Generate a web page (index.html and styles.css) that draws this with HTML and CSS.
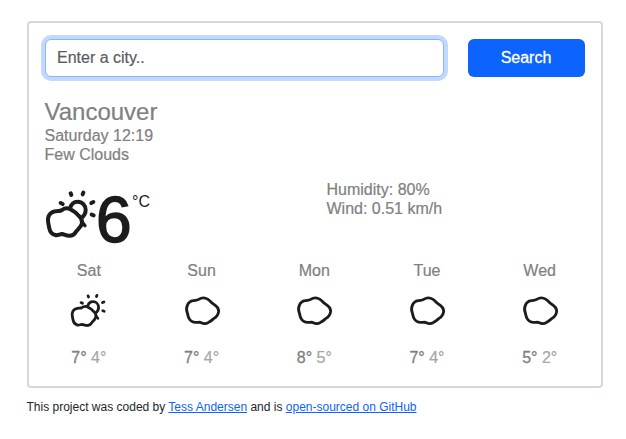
FILE: index.html
```html
<!DOCTYPE html>
<html lang="en">
<head>
<meta charset="utf-8">
<title>Weather</title>
<link rel="stylesheet" href="styles.css">
</head>
<body>
<svg class="defs" aria-hidden="true">
  <symbol id="few" viewBox="0 0 180 180">
    <g fill="none" stroke="#1c1c1c" stroke-linecap="round" stroke-linejoin="round">
      <path stroke-width="12" d="M84 71C87 58 95 50 107 50C121 50 131 61 131 75C131 85 126 93 118 99"/>
      <path stroke-width="12" d="M40 79C48 76 53 80 60 75C68 69 79 69 87 74C94 79 99 79 105 87C109 92 115 96 118 102C122 111 120 118 115 125C110 132 106 134 102 140C97 149 91 153 81 152C73 152 67 148 60 147C52 148 47 152 40 150C29 148 24 140 22 130C20 120 17 110 18 101C20 88 28 81 40 79Z"/>
      <path stroke-width="10" d="M120 110L129 122"/>
      <path stroke-width="12" d="M86 25L88 30M124 23L122 28M148 54L154 51M149 89L155 91M56 54L62 57"/>
    </g>
  </symbol>
  <symbol id="cloud" viewBox="0 0 120 120">
    <path fill="none" stroke="#1c1c1c" stroke-width="8.5" stroke-linejoin="round" d="M33 32C40 30 44 32 50 28C58 23 70 23 78 28C84 32 87 37 93 41C102 46 110 54 110 64C109 74 103 81 95 86C90 90 86 94 80 97C72 102 65 102 58 98C52 95 47 98 41 97C31 97 25 92 21 85C18 80 18 75 16 69C13 62 13 53 16 46C19 39 25 33 33 32Z"/>
  </symbol>
</svg>
<main class="container">
  <section class="card">
    <form class="search">
      <input class="city-input" type="text" placeholder="Enter a city..">
      <button class="search-btn" type="button">Search</button>
    </form>
    <h1 class="city">Vancouver</h1>
    <div class="detail">Saturday 12:19</div>
    <div class="detail">Few Clouds</div>
    <div class="current">
      <div class="now">
        <svg class="icon-now"><use href="#few"/></svg>
        <span class="temp">6</span><span class="unit">°C</span>
      </div>
      <div class="stats">
        <div class="detail">Humidity: 80%</div>
        <div class="detail">Wind: 0.51 km/h</div>
      </div>
    </div>
    <div class="forecast">
      <div class="day"><div class="name">Sat</div><svg class="icon few"><use href="#few"/></svg><div class="range">7° <span class="low">4°</span></div></div>
      <div class="day"><div class="name">Sun</div><svg class="icon"><use href="#cloud"/></svg><div class="range">7° <span class="low">4°</span></div></div>
      <div class="day"><div class="name">Mon</div><svg class="icon"><use href="#cloud"/></svg><div class="range">8° <span class="low">5°</span></div></div>
      <div class="day"><div class="name">Tue</div><svg class="icon"><use href="#cloud"/></svg><div class="range">7° <span class="low">4°</span></div></div>
      <div class="day"><div class="name">Wed</div><svg class="icon"><use href="#cloud"/></svg><div class="range">5° <span class="low">2°</span></div></div>
    </div>
  </section>
  <footer class="credit">This project was coded by <a href="#">Tess Andersen</a> and is <a href="#">open-sourced on GitHub</a></footer>
</main>
</body>
</html>
```
FILE: styles.css
```css
* { box-sizing: border-box; }
body {
  margin: 0;
  background: #fff;
  color: #212529;
  font: 16px/24px "Liberation Sans", Arial, sans-serif;
}
.defs { display: none; }
.container { width: 576px; margin: 21px 0 0 27px; }
.card {
  height: 367px;
  padding: 16px;
  border: 2px solid #d4d8dd;
  border-radius: 4px;
}
.search { display: flex; gap: 24px; }
.city-input {
  width: 399px;
  height: 38px;
  padding: 0 11px;
  border: 1px solid #86b7fe;
  border-radius: 6px;
  background: #fff;
  box-shadow: 0 0 0 4px #c2d8ff;
  font: inherit;
  outline: none;
}
.city-input::placeholder {
  color: #595c5f;
  opacity: 1;
  -webkit-text-stroke: 0.2px #595c5f;
}
.search-btn {
  width: 117px;
  height: 38px;
  padding: 0 1px 0 0;
  border: 0;
  border-radius: 6px;
  background: #0d63fd;
  color: #fff;
  font: inherit;
  -webkit-text-stroke: 0.3px #fff;
}
.city {
  margin: 20px 0 0 -0.5px;
  color: #808080;
  font-size: 24px;
  font-weight: 400;
  line-height: 29px;
  -webkit-text-stroke: 0.2px #808080;
}
.detail {
  margin-left: -0.5px;
  color: #808080;
  line-height: 19px;
  -webkit-text-stroke: 0.2px #808080;
}
.current { display: flex; height: 95px; padding-top: 16px; }
.now { display: flex; width: 282px; }
.icon-now { width: 60px; height: 60px; margin: 5px 0 0 -3px; }
.temp {
  width: 36px;
  margin: 1px 0 0 -6px;
  color: #1c1c1c;
  font-size: 64px;
  line-height: 78px;
  -webkit-text-stroke: 1.5px #1c1c1c;
}
.unit { margin: 10px 0 0; color: #1c1c1c; line-height: 24px; }
.forecast { display: flex; margin: 0 -11px 0 -12.5px; }
.day {
  display: flex;
  flex: 1;
  flex-direction: column;
  align-items: center;
  color: #808080;
  -webkit-text-stroke: 0.2px #808080;
}
.icon { width: 40px; height: 40px; margin: 7px 0 16px; }
.icon.few { width: 42px; height: 42px; margin: 7px 0 14px; }
.range { white-space: nowrap; -webkit-text-stroke: 0.3px #808080; }
.low { color: #a5a5a5; -webkit-text-stroke: 0.2px #a5a5a5; }
.credit { margin: 10px 0 0 -0.5px; font-size: 12px; line-height: 18px; }
.credit a { color: #0d63fd; }
```
